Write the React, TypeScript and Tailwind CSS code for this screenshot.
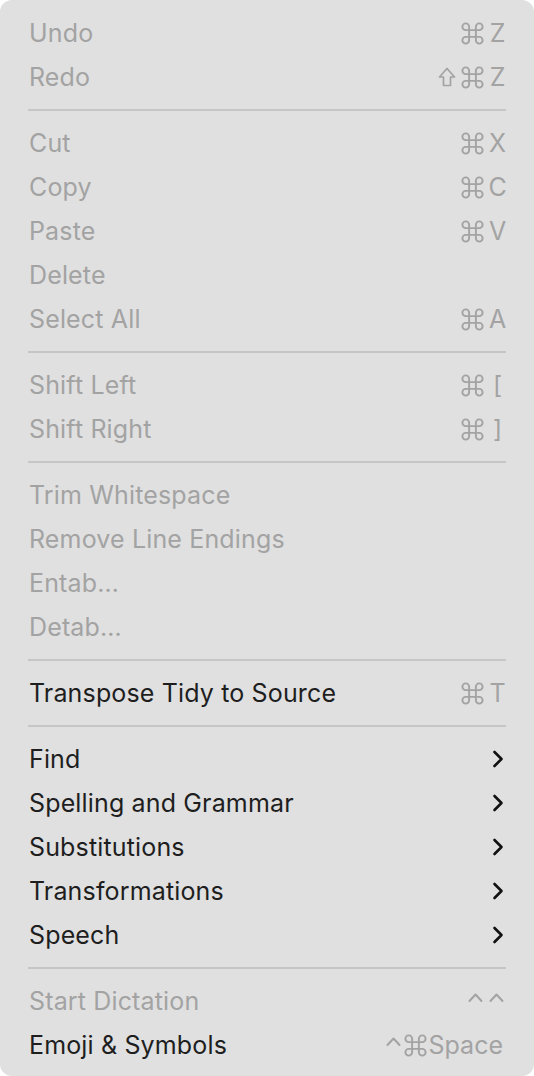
import React from "react";
import { Command } from "lucide-react";

type Mod = "cmd" | "shift" | "ctrl";
type Item =
  | { type: "sep" }
  | { type: "item"; label: string; disabled?: boolean; mods?: Mod[]; keyc?: string; sub?: boolean };

const items: Item[] = [
  { type: "item", label: "Undo", disabled: true, mods: ["cmd"], keyc: "Z" },
  { type: "item", label: "Redo", disabled: true, mods: ["shift", "cmd"], keyc: "Z" },
  { type: "sep" },
  { type: "item", label: "Cut", disabled: true, mods: ["cmd"], keyc: "X" },
  { type: "item", label: "Copy", disabled: true, mods: ["cmd"], keyc: "C" },
  { type: "item", label: "Paste", disabled: true, mods: ["cmd"], keyc: "V" },
  { type: "item", label: "Delete", disabled: true },
  { type: "item", label: "Select All", disabled: true, mods: ["cmd"], keyc: "A" },
  { type: "sep" },
  { type: "item", label: "Shift Left", disabled: true, mods: ["cmd"], keyc: "[" },
  { type: "item", label: "Shift Right", disabled: true, mods: ["cmd"], keyc: "]" },
  { type: "sep" },
  { type: "item", label: "Trim Whitespace", disabled: true },
  { type: "item", label: "Remove Line Endings", disabled: true },
  { type: "item", label: "Entab…", disabled: true },
  { type: "item", label: "Detab…", disabled: true },
  { type: "sep" },
  { type: "item", label: "Transpose Tidy to Source", mods: ["cmd"], keyc: "T" },
  { type: "sep" },
  { type: "item", label: "Find", sub: true },
  { type: "item", label: "Spelling and Grammar", sub: true },
  { type: "item", label: "Substitutions", sub: true },
  { type: "item", label: "Transformations", sub: true },
  { type: "item", label: "Speech", sub: true },
  { type: "sep" },
  { type: "item", label: "Start Dictation", disabled: true, mods: ["ctrl"], keyc: "^" },
  { type: "item", label: "Emoji & Symbols", mods: ["ctrl", "cmd"], keyc: "Space" },
];

const GRAY = "#a3a3a3";

function Chevron() {
  return (
    <svg width="12" height="18" viewBox="0 0 12 18" className="mr-[2px]">
      <path d="M2.5 2 L9.5 9 L2.5 16" fill="none" stroke="#111" strokeWidth="2.6" strokeLinecap="round" strokeLinejoin="round" />
    </svg>
  );
}

function Ctrl() {
  return (
    <svg width="15" height="20" viewBox="0 0 15 20">
      <path d="M1.5 10 L7.5 3.5 L13.5 10" fill="none" stroke={GRAY} strokeWidth="2" strokeLinecap="round" strokeLinejoin="round" />
    </svg>
  );
}

function Shift() {
  return (
    <svg width="18" height="20" viewBox="0 0 18 20">
      <path d="M9 1.5 L16.5 10 H12.5 V18.5 H5.5 V10 H1.5 Z" fill="none" stroke={GRAY} strokeWidth="1.7" strokeLinejoin="round" />
    </svg>
  );
}

function Cmd() {
  return <Command size={27} strokeWidth={1.7} color={GRAY} className="-mx-[3px] -my-[4px]" />;
}

function ModIcon({ m }: { m: Mod }) {
  if (m === "cmd") return <Cmd />;
  if (m === "shift") return <Shift />;
  return <Ctrl />;
}

export default function App() {
  return (
    <div className="w-[534px] h-[1076px] bg-white">
      <div
        className="w-[534px] h-[1076px] rounded-[12px] bg-[#e0e0e0] pt-[11px] pb-[9px] px-[28px]"
        style={{ fontFamily: "Inter, 'DejaVu Sans', sans-serif" }}
      >
        {items.map((it, i) =>
          it.type === "sep" ? (
            <div key={i} className="h-[22px] flex items-center">
              <div className="h-[2px] w-full bg-[#c6c6c6]" />
            </div>
          ) : (
            <div key={i} className="h-[44px] flex items-center justify-between">
              <span
                className={`pl-[1px] text-[25px] leading-none tracking-[0.15px] ${it.disabled ? "text-[#a3a3a3]" : "text-[#1e1e1e]"}`}
              >
                {it.label}
              </span>
              {it.sub ? (
                <Chevron />
              ) : it.mods ? (
                <span className="flex items-center text-[25px] leading-none text-[#a3a3a3]">
                  {it.mods.length === 2 && it.mods[0] === "shift" ? (
                    <span className="flex items-center gap-[6px]">
                      <Shift />
                      <Cmd />
                    </span>
                  ) : it.mods.length === 2 ? (
                    <span className="flex items-center gap-[4px]">
                      <Ctrl />
                      <Cmd />
                    </span>
                  ) : (
                    <ModIcon m={it.mods[0]} />
                  )}
                  {it.keyc === "^" ? (
                    <span className="ml-[6px] mr-[2px] flex">
                      <Ctrl />
                    </span>
                  ) : it.keyc && it.keyc.length > 1 ? (
                    <span className="ml-[3px] mr-[3px]">{it.keyc}</span>
                  ) : (
                    <span className="ml-[7px] mr-[1px] w-[15px] flex justify-center">{it.keyc}</span>
                  )}
                </span>
              ) : null}
            </div>
          )
        )}
      </div>
    </div>
  );
}
